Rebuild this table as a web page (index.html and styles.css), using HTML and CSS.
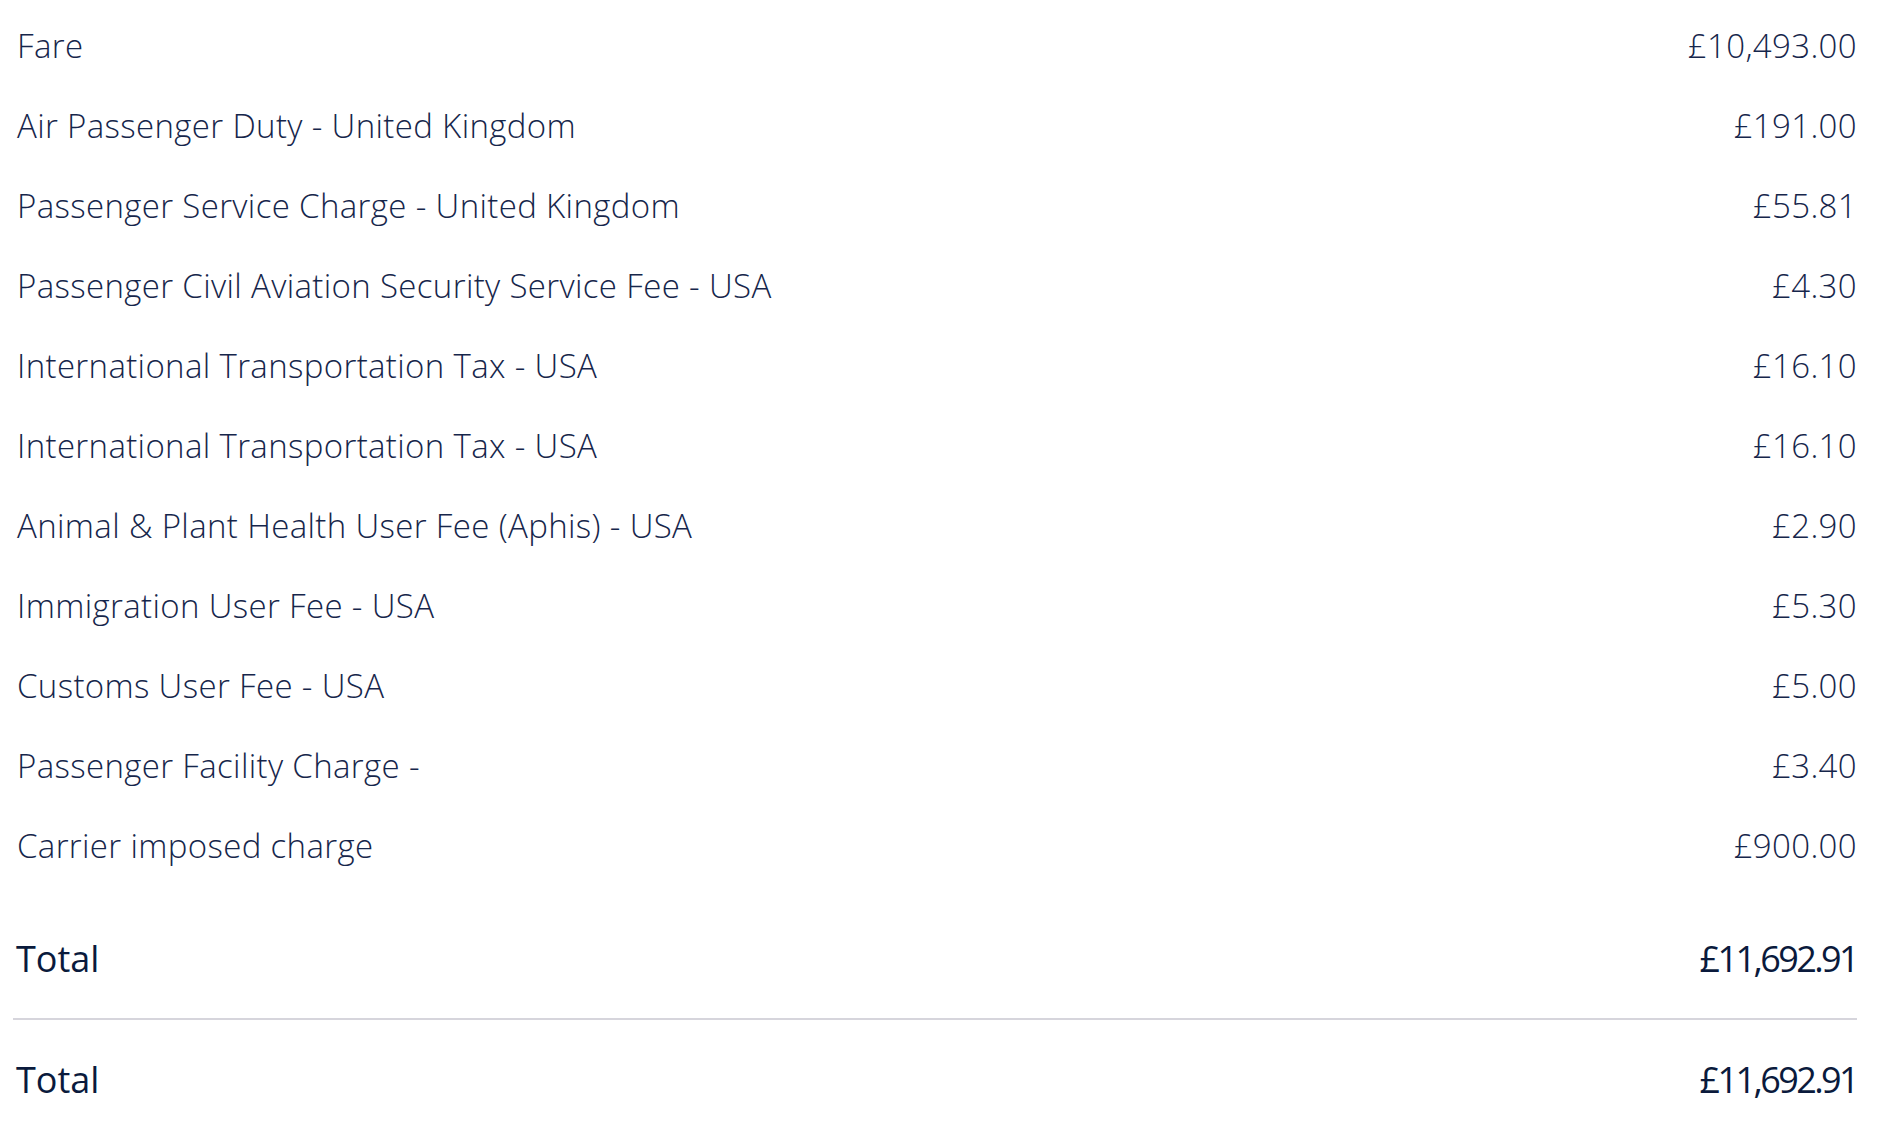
FILE: index.html
```html
<!DOCTYPE html>
<html>
<head>
<meta charset="utf-8">
<link rel="stylesheet" href="styles.css">
</head>
<body>
<div class="breakdown">
  <div class="items">
    <div class="row"><span>Fare</span><span>£10,493.00</span></div>
    <div class="row"><span>Air Passenger Duty - United Kingdom</span><span>£191.00</span></div>
    <div class="row"><span>Passenger Service Charge - United Kingdom</span><span>£55.81</span></div>
    <div class="row"><span>Passenger Civil Aviation Security Service Fee - USA</span><span>£4.30</span></div>
    <div class="row"><span>International Transportation Tax - USA</span><span>£16.10</span></div>
    <div class="row"><span>International Transportation Tax - USA</span><span>£16.10</span></div>
    <div class="row"><span>Animal &amp; Plant Health User Fee (Aphis) - USA</span><span>£2.90</span></div>
    <div class="row"><span>Immigration User Fee - USA</span><span>£5.30</span></div>
    <div class="row"><span>Customs User Fee - USA</span><span>£5.00</span></div>
    <div class="row"><span>Passenger Facility Charge -</span><span>£3.40</span></div>
    <div class="row"><span>Carrier imposed charge</span><span>£900.00</span></div>
  </div>
  <div class="total total-sub"><span>Total</span><span class="total-amount">£11,692.91</span></div>
  <div class="total total-grand"><span>Total</span><span class="total-amount">£11,692.91</span></div>
</div>
</body>
</html>
```
FILE: styles.css
```css
html, body {
  margin: 0;
  padding: 0;
  background: #ffffff;
}
body {
  font-family: "Open Sans", "Liberation Sans", sans-serif;
  color: #16264b;
}
.breakdown {
  width: 1844px;
  margin-left: 13px;
  padding-top: 6px;
}
.row {
  display: flex;
  justify-content: space-between;
  padding: 18px 0 18px 4px;
  font-size: 33px;
  line-height: 44px;
  font-weight: 300;
  letter-spacing: 0.35px;
}
.total {
  display: flex;
  justify-content: space-between;
  font-size: 36px;
  line-height: 48px;
  font-weight: 400;
  color: #0a1a3c;
  padding-left: 3px;
}
.total-amount {
  letter-spacing: -2.6px;
}
.total-sub {
  padding-top: 49px;
  padding-bottom: 35px;
  border-bottom: 2px solid #d6d5dc;
}
.total-grand {
  padding-top: 36px;
}
```
